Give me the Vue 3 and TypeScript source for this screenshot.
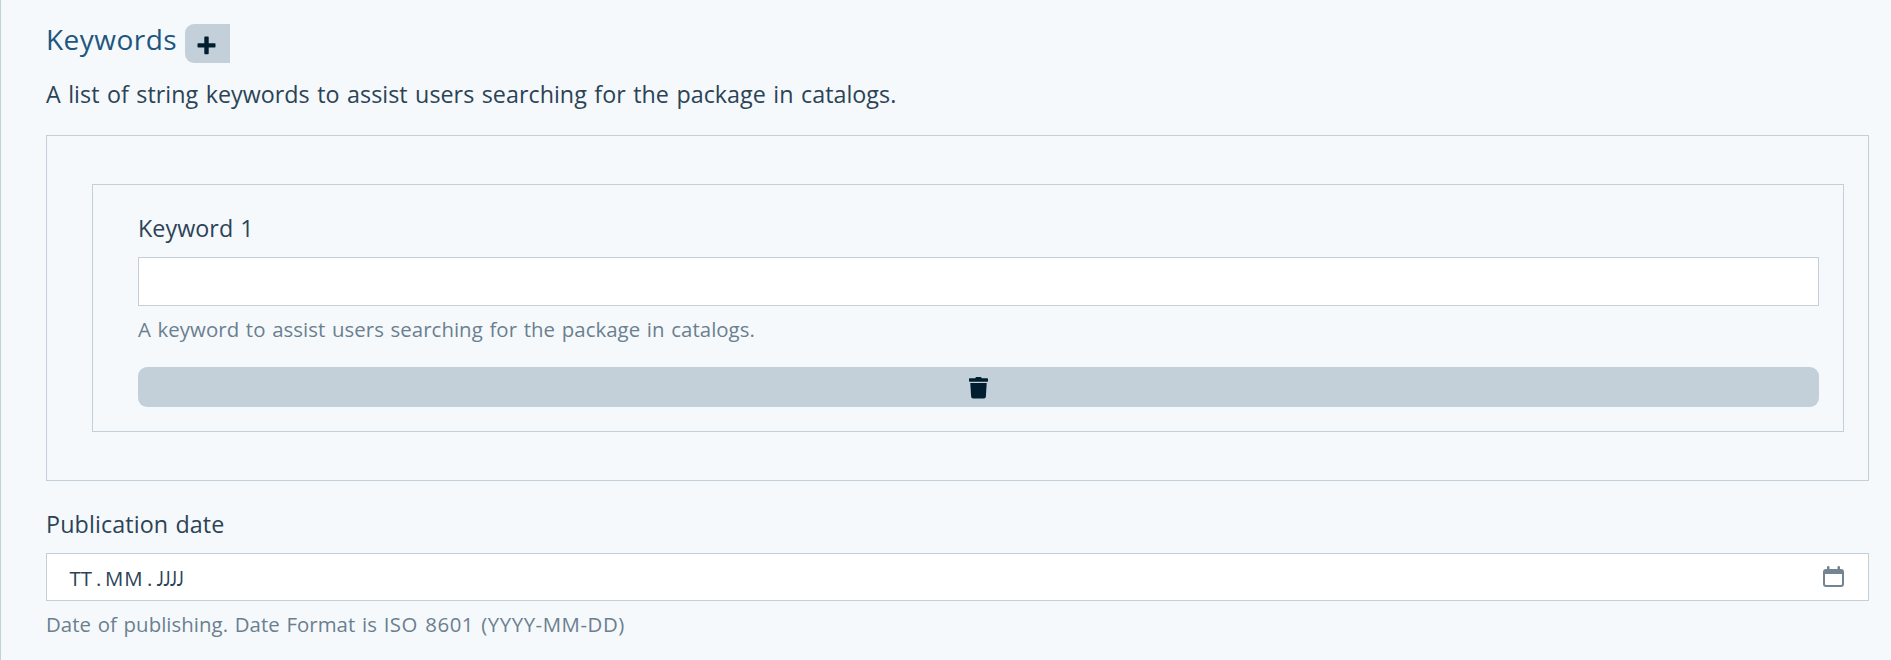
<script setup lang="ts">
import { ref } from 'vue'

interface Keyword {
  id: number
  value: string
}

const keywords = ref<Keyword[]>([{ id: 1, value: '' }])
let nextId = 2

function addKeyword(): void {
  keywords.value.push({ id: nextId++, value: '' })
}

function removeKeyword(id: number): void {
  keywords.value = keywords.value.filter((k) => k.id !== id)
}
</script>

<template>
  <main class="form">
    <header class="heading">
      <h2 class="title">Keywords</h2>
      <button class="add" type="button" aria-label="Add keyword" @click="addKeyword">
        <svg width="19" height="19" viewBox="0 0 19 19">
          <path d="M8 .5h3q.7 0 .7.7v6.1h6.1q.7 0 .7.7v2.8q0 .7-.7.7h-6.1v6.1q0 .7-.7.7H8q-.7 0-.7-.7v-6.1H1.2q-.7 0-.7-.7V8q0-.7.7-.7h6.1V1.2Q7.300.5 8 .5z" />
        </svg>
      </button>
    </header>
    <p class="lead">A list of string keywords to assist users searching for the package in catalogs.</p>

    <section class="list">
      <div v-for="(keyword, index) in keywords" :key="keyword.id" class="item">
        <label class="label" :for="`keyword-${keyword.id}`">Keyword {{ index + 1 }}</label>
        <input :id="`keyword-${keyword.id}`" v-model="keyword.value" class="input" type="text" />
        <p class="help">A keyword to assist users searching for the package in catalogs.</p>
        <button class="remove" type="button" aria-label="Remove keyword" @click="removeKeyword(keyword.id)">
          <svg width="19" height="22" viewBox="0 0 19 22">
            <path d="M6.200 1.200 6.800.3Q7 0 7.400 0h4.200q.4 0 .6.300l.6.900h5.500q.7 0 .7.700v2.100q0 .7-.7.700H.7Q0 4.700 0 4V1.900q0-.7.700-.7z" />
            <path d="M1.300 5.900h16.400l-.8 13.700q-.1 1.900-2 1.900H4.100q-1.900 0-2-1.900z" />
          </svg>
        </button>
      </div>
    </section>

    <span class="label label-date">Publication date</span>
    <div class="date">
      <div class="parts">
        <span class="day">TT</span><span class="dot">.</span>
        <span class="month">MM</span><span class="dot">.</span>
        <span class="year">JJJJ</span>
      </div>
      <svg class="calendar" width="21" height="21" viewBox="0 0 21 21">
        <path
          fill-rule="evenodd"
          d="M4 3V1q0-1 1.200-1t1.300 1v2h8V1q0-1 1.300-1T17 1v2h1q3 0 3 3v12q0 3-3 3H3q-3 0-3-3V6q0-3 3-3zM2 8v10q0 1 1 1h15q1 0 1-1V8z"
        />
      </svg>
    </div>
    <p class="help help-date">Date of publishing. Date Format is <span class="format">ISO 8601 (YYYY-MM-DD)</span></p>
  </main>
</template>

<style>
body {
  margin: 0;
  background: #f5f9fc;
}
</style>

<style scoped>
.form {
  box-sizing: border-box;
  min-height: 660px;
  padding: 19px 22px 0 45px;
  border-left: 1px solid #c3d0d9;
  background: #f5f9fc;
  color: #2c4356;
  font-family: "Segoe UI", "Open Sans", "Noto Sans", sans-serif;
}

.heading {
  display: flex;
  height: 45px;
  align-items: flex-start;
}

.title {
  width: 139px;
  margin: 0;
  color: #1f5680;
  font-size: 28px;
  font-weight: 400;
  line-height: 40px;
  letter-spacing: 0.48px;
}

.add,
.remove {
  display: flex;
  align-items: center;
  justify-content: center;
  padding: 0;
  border: 0;
  background: #c3d0d9;
  fill: #001e30;
}

.add {
  width: 45px;
  height: 39px;
  margin-top: 5px;
  padding: 4px 2px 0 0;
  border-radius: 9px 0 0 9px;
}

.lead {
  margin: 12px 0 23px;
  font-size: 23.3px;
  line-height: 36px;
  letter-spacing: 0.02px;
  word-spacing: 1.4px;
}

.list {
  padding: 48px 24px 48px 45px;
  border: 1px solid #c3d0d9;
}

.item {
  padding: 25px 24px 24px 45px;
  border: 1px solid #c3d0d9;
}

.label {
  display: block;
  font-size: 23.3px;
  line-height: 36px;
  letter-spacing: 0.05px;
  word-spacing: 1px;
}

.label-date {
  margin-top: 25px;
  letter-spacing: 0.12px;
}

.input {
  display: block;
  box-sizing: border-box;
  width: 100%;
  height: 49px;
  margin: 11px 0 8px;
  padding: 0 23px;
  border: 1px solid #c3d0d9;
  border-radius: 0;
  outline: 0;
  background: #fff;
  color: #2c4356;
  font: inherit;
  font-size: 20.4px;
}

.help {
  margin: 0;
  color: #6b7f8f;
  font-size: 20.4px;
  line-height: 30px;
  letter-spacing: 0.04px;
  word-spacing: 1.35px;
}

.help-date {
  letter-spacing: 0.04px;
}

.format {
  letter-spacing: 0.55px;
}

.remove {
  width: 100%;
  height: 40px;
  margin-top: 23px;
  padding-top: 2px;
  border-radius: 9px;
}

.date {
  display: flex;
  box-sizing: border-box;
  height: 48px;
  align-items: center;
  justify-content: space-between;
  margin: 11px 0 8px;
  padding: 0 24px 0 23px;
  border: 1px solid #c3d0d9;
  background: #fff;
}

.parts {
  display: flex;
  padding-top: 1px;
  font-size: 20.4px;
  line-height: 30px;
}

.day {
  width: 26.500px;
  margin-left: -0.5px;
}

.dot {
  width: 9px;
}

.month {
  width: 42px;
  letter-spacing: 0.8px;
}

.year {
  padding-left: 1px;
  font-family: "Segoe UI", Lato, sans-serif;
  transform: scaleX(0.8);
  transform-origin: left;
}

.calendar {
  margin-bottom: 1px;
  fill: #738492;
}
</style>
